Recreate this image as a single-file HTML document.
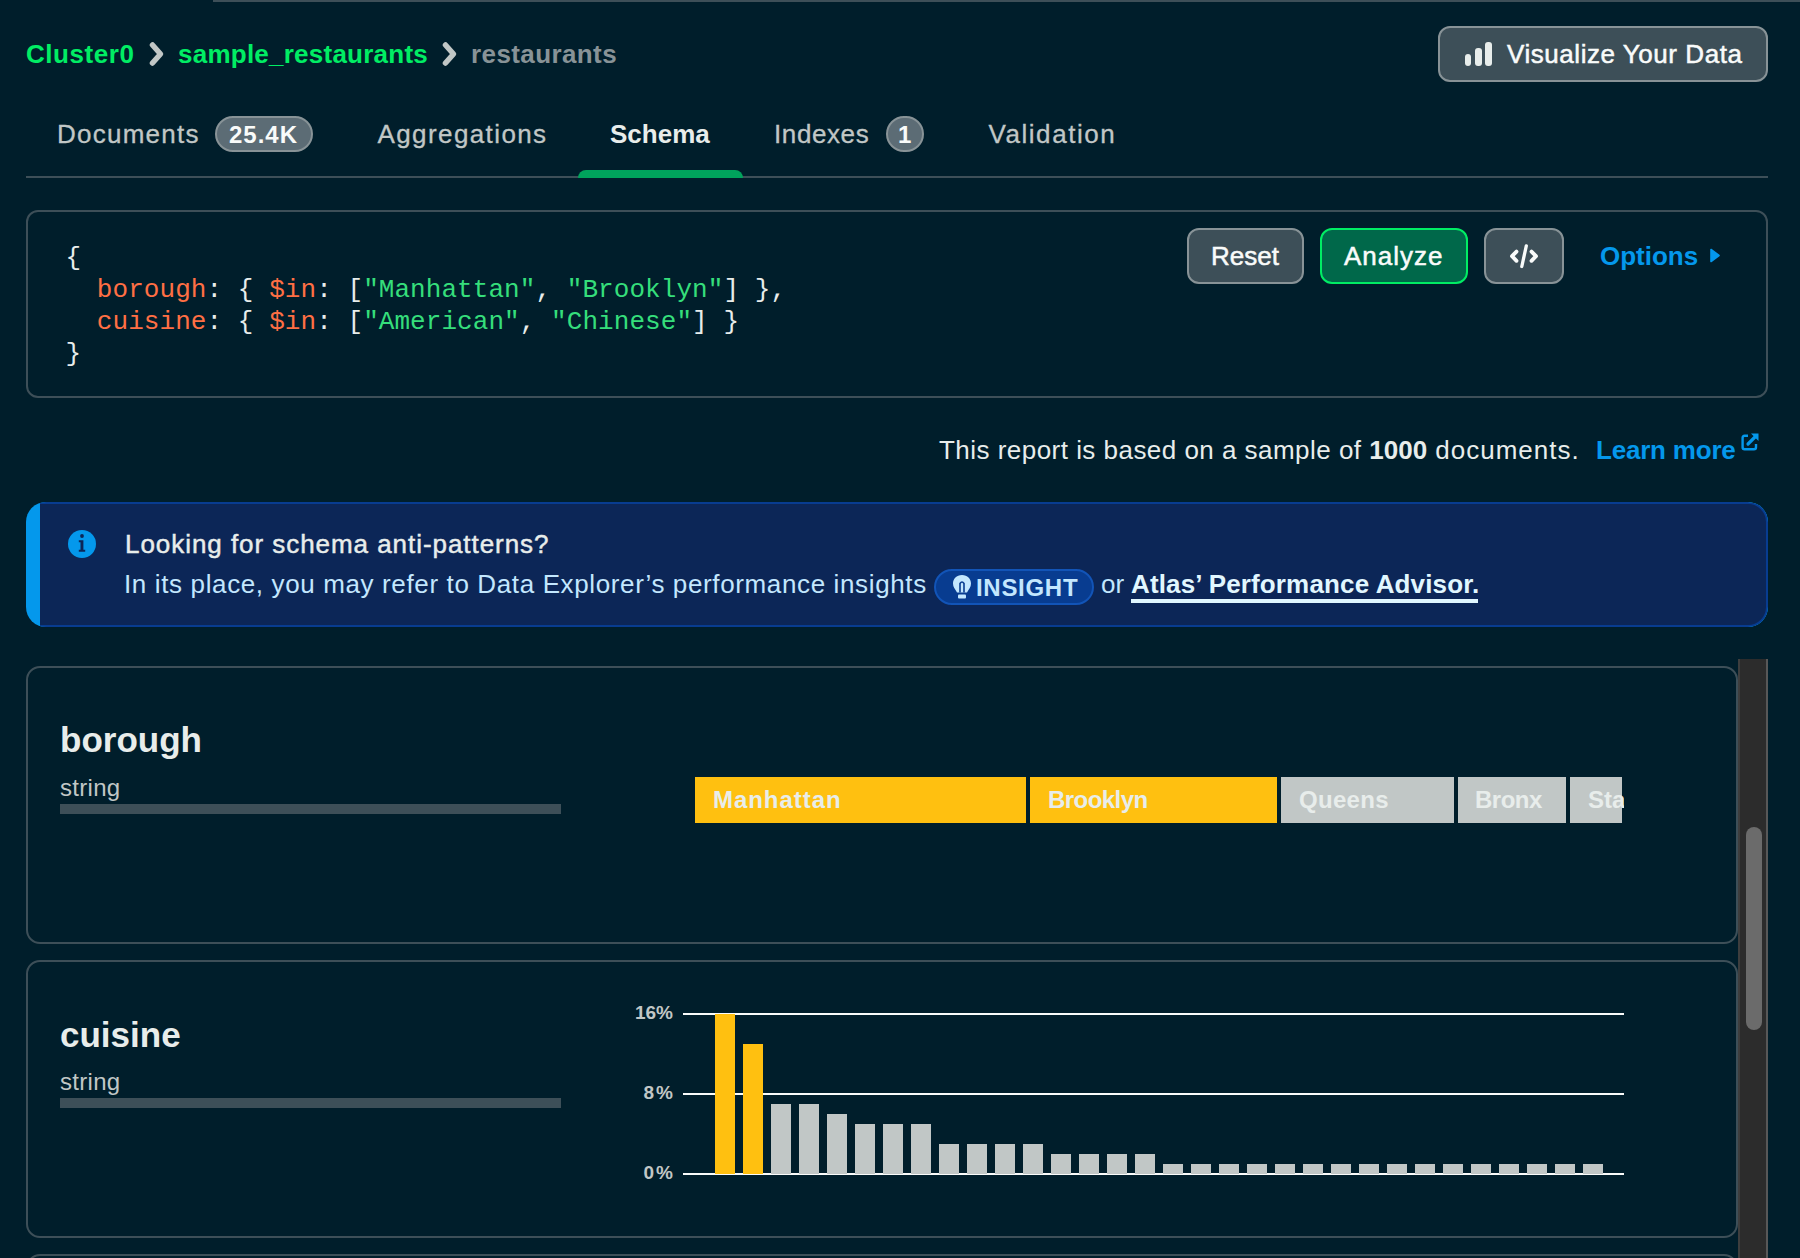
<!DOCTYPE html>
<html>
<head>
<meta charset="utf-8">
<style>
*{box-sizing:border-box;margin:0;padding:0}
html,body{width:1800px;height:1258px;overflow:hidden;background:#001E2B}
body{position:relative;font-family:"Liberation Sans",sans-serif;color:#E8EDEB}
.a{position:absolute;white-space:pre}
.t26{font-size:26px;line-height:30px}
.b{font-weight:700}
.box{position:absolute}
.mono{font-family:"Liberation Mono",monospace;font-size:26px;line-height:32px;white-space:pre}
</style>
</head>
<body>
<!-- top line -->
<div class="box" style="left:213px;top:0;width:1587px;height:2px;background:#3D4F58"></div>

<!-- breadcrumb -->
<div class="a t26 b" style="left:26px;top:39px;color:#00ED64;letter-spacing:0.55px">Cluster0</div>
<svg class="box" style="left:148px;top:40px" width="18" height="28" viewBox="0 0 18 28"><path d="M4.5 5 L12.5 14 L4.5 23" fill="none" stroke="#C1C7C6" stroke-width="5.5" stroke-linecap="round" stroke-linejoin="round"/></svg>
<div class="a t26 b" style="left:178px;top:39px;color:#00ED64;letter-spacing:0.24px">sample_restaurants</div>
<svg class="box" style="left:441px;top:40px" width="18" height="28" viewBox="0 0 18 28"><path d="M4.5 5 L12.5 14 L4.5 23" fill="none" stroke="#C1C7C6" stroke-width="5.5" stroke-linecap="round" stroke-linejoin="round"/></svg>
<div class="a t26 b" style="left:471px;top:39px;color:#889397;letter-spacing:0.4px">restaurants</div>

<!-- visualize button -->
<div class="box" style="left:1438px;top:26px;width:330px;height:56px;background:#3D4F58;border:2px solid #889397;border-radius:12px"></div>
<div class="box" style="left:1464.5px;top:53.5px;width:6.5px;height:12.5px;background:#E8EDEB;border-radius:3px"></div>
<div class="box" style="left:1475px;top:47.5px;width:6.5px;height:18.5px;background:#E8EDEB;border-radius:3px"></div>
<div class="box" style="left:1485px;top:41.5px;width:6.5px;height:24.5px;background:#E8EDEB;border-radius:3px"></div>
<div class="a t26" style="left:1507px;top:39px;color:#F9FBFA;letter-spacing:0.55px;-webkit-text-stroke:0.5px #F9FBFA">Visualize Your Data</div>

<!-- tabs -->
<div class="box" style="left:26px;top:176px;width:1742px;height:2px;background:#3D4F58"></div>
<div class="a t26" style="left:57px;top:119px;color:#C1C7C6;letter-spacing:1.25px;-webkit-text-stroke:0.3px #C1C7C6">Documents</div>
<div class="box" style="left:215px;top:116px;width:98px;height:36px;background:#5C6C75;border:2px solid #889397;border-radius:18px"></div>
<div class="a b" style="left:229px;top:121px;font-size:24px;line-height:28px;color:#F9FBFA;letter-spacing:1px">25.4K</div>
<div class="a t26" style="left:377.5px;top:119px;color:#C1C7C6;letter-spacing:1.4px;-webkit-text-stroke:0.3px #C1C7C6">Aggregations</div>
<div class="a t26 b" style="left:610px;top:119px;color:#E8EDEB">Schema</div>
<div class="box" style="left:578px;top:170px;width:165px;height:8px;background:#00A35C;border-radius:8px 8px 0 0"></div>
<div class="a t26" style="left:774px;top:119px;color:#C1C7C6;letter-spacing:0.6px;-webkit-text-stroke:0.3px #C1C7C6">Indexes</div>
<div class="box" style="left:886px;top:116px;width:38px;height:36px;background:#5C6C75;border:2px solid #889397;border-radius:18px"></div>
<div class="a b" style="left:898px;top:121px;font-size:24px;line-height:28px;color:#F9FBFA">1</div>
<div class="a t26" style="left:988.5px;top:119px;color:#C1C7C6;letter-spacing:1.55px;-webkit-text-stroke:0.3px #C1C7C6">Validation</div>

<!-- query bar -->
<div class="box" style="left:26px;top:210px;width:1742px;height:188px;border:2px solid #3D4F58;border-radius:12px"></div>
<div class="box mono" style="left:65.5px;top:242px;color:#E8EDEB;letter-spacing:0.06px">{
  <span style="color:#FF6F44">borough</span>: { <span style="color:#FF6F44">$in</span>: [<span style="color:#35DE7B">"Manhattan"</span>, <span style="color:#35DE7B">"Brooklyn"</span>] },
  <span style="color:#FF6F44">cuisine</span>: { <span style="color:#FF6F44">$in</span>: [<span style="color:#35DE7B">"American"</span>, <span style="color:#35DE7B">"Chinese"</span>] }
}</div>

<div class="box" style="left:1187px;top:228px;width:117px;height:56px;background:#3D4F58;border:2px solid #889397;border-radius:12px"></div>
<div class="a t26" style="left:1211px;top:241px;color:#F9FBFA;-webkit-text-stroke:0.5px #F9FBFA">Reset</div>
<div class="box" style="left:1320px;top:228px;width:148px;height:56px;background:#00684A;border:2px solid #00ED64;border-radius:12px"></div>
<div class="a t26" style="left:1344px;top:241px;color:#F9FBFA;letter-spacing:1px;-webkit-text-stroke:0.5px #F9FBFA">Analyze</div>
<div class="box" style="left:1484px;top:228px;width:80px;height:56px;background:#3D4F58;border:2px solid #889397;border-radius:12px"></div>
<svg class="box" style="left:1508px;top:242px" width="32" height="28" viewBox="0 0 32 28"><path d="M8.5 9.6 L4 14.2 L8.5 18.8 M23.5 9.6 L28 14.2 L23.5 18.8" fill="none" stroke="#F9FBFA" stroke-width="3.8" stroke-linecap="round" stroke-linejoin="round"/><path d="M18.3 3.8 L13.8 24.5" stroke="#F9FBFA" stroke-width="3.3" stroke-linecap="round"/></svg>
<div class="a t26 b" style="left:1600px;top:241px;color:#0498EC">Options</div>
<svg class="box" style="left:1709px;top:247px" width="12" height="17" viewBox="0 0 12 17"><path d="M2 2.5 L10 8.5 L2 14.5 Z" fill="#0498EC" stroke="#0498EC" stroke-width="1.6" stroke-linejoin="round"/></svg>

<!-- report line -->
<div class="a t26" style="left:939px;top:435px;color:#E8EDEB;letter-spacing:0.47px">This report is based on a sample of <b style="letter-spacing:0px">1000</b><span style="letter-spacing:1px"> documents.</span></div>
<div class="a t26 b" style="left:1596px;top:435px;color:#0498EC;letter-spacing:-0.2px">Learn more</div>
<svg class="box" style="left:1740px;top:432px" width="20" height="20" viewBox="0 0 20 20"><path d="M8 3.8 H4.6 Q2.6 3.8 2.6 5.8 V15.3 Q2.6 17.3 4.6 17.3 H14 Q16 17.3 16 15.3 V12" fill="none" stroke="#0498EC" stroke-width="2.4"/><path d="M8 12 L16 4" stroke="#0498EC" stroke-width="3.2" stroke-linecap="round"/><path d="M11 1.5 H18.5 V9 Z" fill="#0498EC"/></svg>

<!-- banner -->
<div class="box" style="left:26px;top:502px;width:1742px;height:125px;background:#0498EC;border-radius:20px;overflow:hidden"><div class="box" style="left:14px;top:0;right:0;bottom:0;background:#0C2657;border:2px solid #083C90;border-left:0;border-radius:0 20px 20px 0"></div></div>
<svg class="box" style="left:68px;top:530px" width="28" height="28" viewBox="0 0 28 28"><circle cx="14" cy="14" r="14" fill="#0498EC"/><circle cx="14" cy="6" r="1.9" fill="#0C2657"/><path d="M10.8 10.2 H15.4 V19.8 H17.2 V21.8 H10.8 V19.8 H12.5 V12.2 H10.8 Z" fill="#0C2657"/></svg>
<div class="a t26" style="left:125px;top:529px;color:#E8EDEB;letter-spacing:0.95px;-webkit-text-stroke:0.45px #E8EDEB">Looking for schema anti-patterns?</div>
<div class="a t26" style="left:124px;top:569px;color:#C3E7FE;letter-spacing:0.63px">In its place, you may refer to Data Explorer’s performance insights</div>
<div class="box" style="left:934px;top:569px;width:160px;height:36px;background:#083C90;border:2px solid #1254B7;border-radius:18px"></div>
<svg class="box" style="left:952px;top:574px" width="20" height="26" viewBox="0 0 20 26"><path d="M10 1 C4.5 1 1 5 1 9.5 C1 13 3 15 5 18.5 L15 18.5 C17 15 19 13 19 9.5 C19 5 15.5 1 10 1 Z" fill="#C3E7FE"/><path d="M8 18.5 V9.5 Q10 6.5 12 9.5 V18.5" fill="none" stroke="#083C90" stroke-width="1.6"/><rect x="6" y="20.5" width="8" height="4" rx="1" fill="#C3E7FE"/></svg>
<div class="a b" style="left:976px;top:574px;font-size:24px;line-height:28px;color:#C3E7FE;letter-spacing:0.7px">INSIGHT</div>
<div class="a t26" style="left:1101px;top:569px;color:#C3E7FE">or</div>
<div class="a t26 b" style="left:1131px;top:569px;color:#E1F7FF;letter-spacing:0.15px">Atlas’ Performance Advisor.</div>
<div class="box" style="left:1131px;top:599px;width:347px;height:4px;background:#E1F7FF"></div>

<!-- cards -->
<div class="box" style="left:26px;top:666px;width:1712px;height:278px;border:2px solid #3D4F58;border-radius:14px"></div>
<div class="a b" style="left:60px;top:720px;font-size:35px;line-height:40px;color:#E8EDEB">borough</div>
<div class="a" style="left:60px;top:774px;font-size:24px;line-height:28px;color:#C1C7C6;letter-spacing:0.3px">string</div>
<div class="box" style="left:60px;top:804px;width:501px;height:10px;background:#3D4F58"></div>

<div class="box" style="left:695px;top:777px;width:331px;height:46px;background:#FFC010"></div>
<div class="box" style="left:1030px;top:777px;width:247px;height:46px;background:#FFC010"></div>
<div class="box" style="left:1281px;top:777px;width:173px;height:46px;background:#C1C7C6"></div>
<div class="box" style="left:1458px;top:777px;width:108px;height:46px;background:#C1C7C6"></div>
<div class="box" style="left:1570px;top:777px;width:52px;height:46px;background:#C1C7C6"></div><div class="box" style="left:1570px;top:777px;width:54px;height:46px;overflow:hidden"><div class="a b" style="left:18px;top:8.5px;font-size:24px;line-height:28px;color:#E8EDEB">Staten Island</div></div>
<div class="a b" style="left:713px;top:785.5px;font-size:24px;line-height:28px;color:#E8EDEB;letter-spacing:0.95px">Manhattan</div>
<div class="a b" style="left:1048px;top:785.5px;font-size:24px;line-height:28px;color:#E8EDEB;letter-spacing:-0.55px">Brooklyn</div>
<div class="a b" style="left:1299px;top:785.5px;font-size:24px;line-height:28px;color:#E8EDEB;letter-spacing:0.3px">Queens</div>
<div class="a b" style="left:1475px;top:785.5px;font-size:24px;line-height:28px;color:#E8EDEB;letter-spacing:-0.5px">Bronx</div>

<div class="box" style="left:26px;top:960px;width:1712px;height:278px;border:2px solid #3D4F58;border-radius:14px"></div>
<div class="a b" style="left:60px;top:1015px;font-size:35px;line-height:40px;color:#E8EDEB">cuisine</div>
<div class="a" style="left:60px;top:1068px;font-size:24px;line-height:28px;color:#C1C7C6;letter-spacing:0.3px">string</div>
<div class="box" style="left:60px;top:1098px;width:501px;height:10px;background:#3D4F58"></div>

<div class="a b" style="left:600px;top:1002px;width:73px;text-align:right;font-size:19px;line-height:22px;color:#C1C7C6">16%</div>
<div class="a b" style="left:600px;top:1082px;width:75px;text-align:right;font-size:19px;line-height:22px;color:#C1C7C6;letter-spacing:2px">8%</div>
<div class="a b" style="left:600px;top:1162px;width:75px;text-align:right;font-size:19px;line-height:22px;color:#C1C7C6;letter-spacing:2px">0%</div>
<svg class="box" style="left:0;top:0" width="1800" height="1258">
<g fill="#F9FBFA"><rect x="683" y="1013" width="941" height="2"/><rect x="683" y="1093" width="941" height="2"/><rect x="683" y="1173" width="941" height="2"/></g>
<g id="bars"><rect x="715" y="1014" width="20" height="160" fill="#FFC010"/><rect x="743" y="1044" width="20" height="130" fill="#FFC010"/><rect x="771" y="1104" width="20" height="70" fill="#C1C7C6"/><rect x="799" y="1104" width="20" height="70" fill="#C1C7C6"/><rect x="827" y="1114" width="20" height="60" fill="#C1C7C6"/><rect x="855" y="1124" width="20" height="50" fill="#C1C7C6"/><rect x="883" y="1124" width="20" height="50" fill="#C1C7C6"/><rect x="911" y="1124" width="20" height="50" fill="#C1C7C6"/><rect x="939" y="1144" width="20" height="30" fill="#C1C7C6"/><rect x="967" y="1144" width="20" height="30" fill="#C1C7C6"/><rect x="995" y="1144" width="20" height="30" fill="#C1C7C6"/><rect x="1023" y="1144" width="20" height="30" fill="#C1C7C6"/><rect x="1051" y="1154" width="20" height="20" fill="#C1C7C6"/><rect x="1079" y="1154" width="20" height="20" fill="#C1C7C6"/><rect x="1107" y="1154" width="20" height="20" fill="#C1C7C6"/><rect x="1135" y="1154" width="20" height="20" fill="#C1C7C6"/><rect x="1163" y="1164" width="20" height="10" fill="#C1C7C6"/><rect x="1191" y="1164" width="20" height="10" fill="#C1C7C6"/><rect x="1219" y="1164" width="20" height="10" fill="#C1C7C6"/><rect x="1247" y="1164" width="20" height="10" fill="#C1C7C6"/><rect x="1275" y="1164" width="20" height="10" fill="#C1C7C6"/><rect x="1303" y="1164" width="20" height="10" fill="#C1C7C6"/><rect x="1331" y="1164" width="20" height="10" fill="#C1C7C6"/><rect x="1359" y="1164" width="20" height="10" fill="#C1C7C6"/><rect x="1387" y="1164" width="20" height="10" fill="#C1C7C6"/><rect x="1415" y="1164" width="20" height="10" fill="#C1C7C6"/><rect x="1443" y="1164" width="20" height="10" fill="#C1C7C6"/><rect x="1471" y="1164" width="20" height="10" fill="#C1C7C6"/><rect x="1499" y="1164" width="20" height="10" fill="#C1C7C6"/><rect x="1527" y="1164" width="20" height="10" fill="#C1C7C6"/><rect x="1555" y="1164" width="20" height="10" fill="#C1C7C6"/><rect x="1583" y="1164" width="20" height="10" fill="#C1C7C6"/></g>
</svg>

<div class="box" style="left:26px;top:1254px;width:1712px;height:100px;border:2px solid #3D4F58;border-radius:14px"></div>

<!-- scrollbar -->
<div class="box" style="left:1738px;top:659px;width:30px;height:600px;background:#2C2C2C;border-left:2px solid #3E3E3E;border-right:2px solid #585858"></div>
<div class="box" style="left:1746px;top:827px;width:16px;height:203px;background:#6B6B6B;border-radius:8px"></div>
</body>
</html>
